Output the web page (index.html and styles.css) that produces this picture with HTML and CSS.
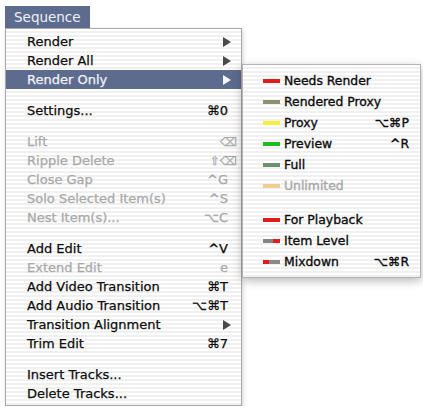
FILE: index.html
```html
<!DOCTYPE html>
<html lang="en">
<head>
    <meta charset="UTF-8">
    <title>Sequence Menu</title>
    <link rel="stylesheet" href="styles.css">
</head>
<body>
    <div class="menubar">
        <div class="menu-title">Sequence</div>
    </div>
    <div class="menu">
        <div class="item"><span class="label">Render</span><span class="arrow"></span></div>
        <div class="item"><span class="label">Render All</span><span class="arrow"></span></div>
        <div class="item active"><span class="label">Render Only</span><span class="arrow"></span></div>
        <div class="sep"></div>
        <div class="item"><span class="label">Settings...</span><span class="key">⌘0</span></div>
        <div class="sep"></div>
        <div class="item disabled"><span class="label">Lift</span><span class="key wide">⌫</span></div>
        <div class="item disabled"><span class="label">Ripple Delete</span><span class="key wide">⇧⌫</span></div>
        <div class="item disabled"><span class="label">Close Gap</span><span class="key"><b>^</b>G</span></div>
        <div class="item disabled"><span class="label">Solo Selected Item(s)</span><span class="key"><b>^</b>S</span></div>
        <div class="item disabled"><span class="label">Nest Item(s)...</span><span class="key">⌥C</span></div>
        <div class="sep"></div>
        <div class="item"><span class="label">Add Edit</span><span class="key"><b>^</b>V</span></div>
        <div class="item disabled"><span class="label">Extend Edit</span><span class="key">e</span></div>
        <div class="item"><span class="label">Add Video Transition</span><span class="key">⌘T</span></div>
        <div class="item"><span class="label">Add Audio Transition</span><span class="key">⌥⌘T</span></div>
        <div class="item"><span class="label">Transition Alignment</span><span class="arrow"></span></div>
        <div class="item"><span class="label">Trim Edit</span><span class="key">⌘7</span></div>
        <div class="sep"></div>
        <div class="item"><span class="label">Insert Tracks...</span></div>
        <div class="item"><span class="label">Delete Tracks...</span></div>

        <!-- submenu for Render Only -->
        <div class="submenu">
            <div class="sub-item"><span class="swatch red"></span><span class="label">Needs Render</span></div>
            <div class="sub-item"><span class="swatch olive"></span><span class="label">Rendered Proxy</span></div>
            <div class="sub-item"><span class="swatch yellow"></span><span class="label">Proxy</span><span class="key">⌥⌘P</span></div>
            <div class="sub-item"><span class="swatch green"></span><span class="label">Preview</span><span class="key"><b>^</b>R</span></div>
            <div class="sub-item"><span class="swatch gray-green"></span><span class="label">Full</span></div>
            <div class="sub-item disabled"><span class="swatch tan"></span><span class="label">Unlimited</span></div>
            <div class="sep"></div>
            <div class="sub-item"><span class="swatch red"></span><span class="label">For Playback</span></div>
            <div class="sub-item"><span class="swatch gray-red"></span><span class="label">Item Level</span></div>
            <div class="sub-item"><span class="swatch red-gray"></span><span class="label">Mixdown</span><span class="key">⌥⌘R</span></div>
        </div>
    </div>
</body>
</html>
```

FILE: styles.css
```css
* {
    margin: 0;
    padding: 0;
    box-sizing: border-box;
}

body {
    font-family: "DejaVu Sans", "Liberation Sans", sans-serif;
    font-size: 13px;
    color: #0c0c0c;
    background-color: #fff;
    padding: 6px 0 0 5px;
}

.menubar {
    display: flex;
}

.menu-title {
    height: 22px;
    line-height: 22px;
    padding: 0 9px 0 9px;
    background-color: #5d6c8e;
    color: #eef1f6;
    font-size: 13.5px;
}

.menu {
    position: relative;
    width: 237px;
    padding: 3px 0 2px;
    border: 1px solid #a9a9a9;
    background: repeating-linear-gradient(to bottom, #fff 0 2px, #f0f0f0 2px 4px);
    box-shadow: 1px 2px 4px rgba(0,0,0,0.18);
    -webkit-text-stroke: 0.25px currentColor;
}

.item {
    display: flex;
    align-items: center;
    height: 19px;
    padding: 0 13px 0 21px;
}

.item .label,
.sub-item .label {
    flex: 1;
    white-space: nowrap;
}

.key {
    white-space: nowrap;
}

.key b {
    font-weight: bold;
}

.key.wide {
    margin-right: -9px;
    font-size: 12px;
}

.arrow {
    width: 0;
    height: 0;
    margin-right: -3px;
    border-top: 5px solid transparent;
    border-bottom: 5px solid transparent;
    border-left: 8px solid #4a4a4a;
}

.item.active {
    background-color: #5d6c8e;
    color: #f2f4f8;
}

.item.active .arrow {
    border-left-color: #f4f6fa;
}

.disabled {
    color: #a8a8a8;
}

.sep {
    height: 12px;
}

/* Render Only submenu */
.submenu {
    position: absolute;
    left: 236px;
    top: 35px;
    width: 179px;
    padding: 5px 0;
    border: 1px solid #b3b3b3;
    background: repeating-linear-gradient(to bottom, #fff 0 2px, #f0f0f0 2px 4px);
    box-shadow: 0 3px 9px rgba(0,0,0,0.28);
    font-size: 12.4px;
    -webkit-text-stroke: 0.35px currentColor;
}

.submenu .sep {
    height: 13px;
}

.sub-item {
    display: flex;
    align-items: center;
    height: 21px;
    padding: 0 11px 0 20px;
}

.swatch {
    width: 17px;
    height: 4px;
    margin-right: 4px;
}

.swatch.red { background-color: #e21c1c; }
.swatch.olive { background-color: #8f8f72; }
.swatch.yellow { background-color: #f4f038; }
.swatch.green { background-color: #1fbd24; }
.swatch.gray-green { background-color: #6f8d6f; }
.swatch.tan { background-color: #f0cc92; }
.swatch.gray-red { background: linear-gradient(to right, #858585 0 10px, #e21c1c 10px); }
.swatch.red-gray { background: linear-gradient(to right, #e21c1c 0 6px, #8a8a8a 6px); }
```
